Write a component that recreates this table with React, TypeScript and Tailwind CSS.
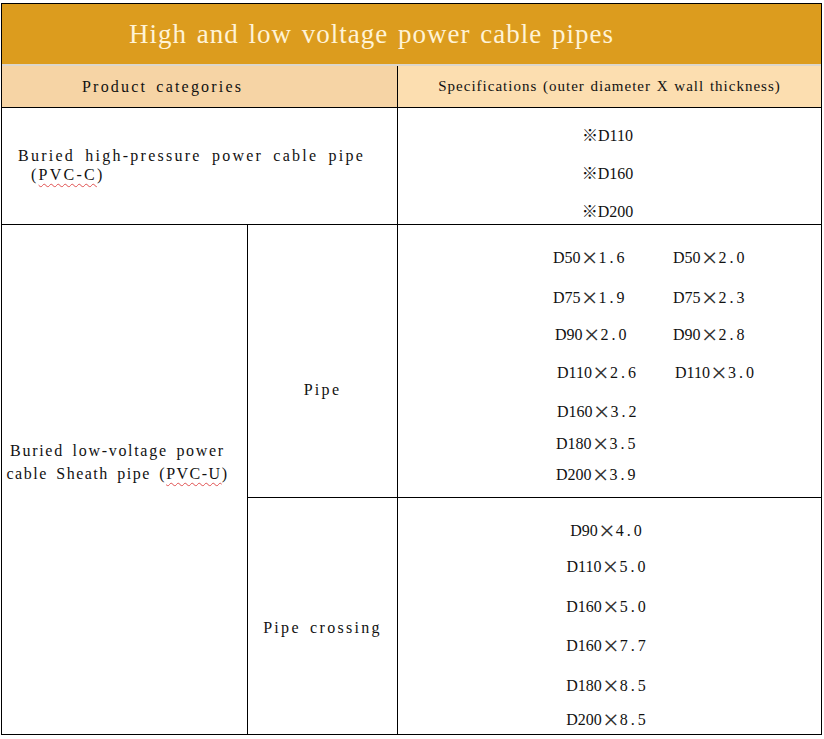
const serif = { fontFamily: '"Liberation Serif", "Noto Sans CJK SC", serif' };

type Spec = { d: string; t: string; ml?: string };

function SpecText({ d, t }: { d: string; t: string }) {
  return (
    <span className="h-[20px] flex items-center whitespace-nowrap">
      {d}
      <span className="w-[18px] h-[20px] flex items-center justify-center text-[28px] leading-none font-light text-[#333]">×</span>
      <span className="tracking-[3px]">{t}</span>
    </span>
  );
}

const pipeRows: { mt: string; left: Spec; right?: Spec }[] = [
  { mt: 'mt-[23px]', left: { d: 'D50', t: '1.6', ml: 'ml-0' }, right: { d: 'D50', t: '2.0', ml: 'ml-0' } },
  { mt: 'mt-[20px]', left: { d: 'D75', t: '1.9', ml: 'ml-0' }, right: { d: 'D75', t: '2.3', ml: 'ml-0' } },
  { mt: 'mt-[17px]', left: { d: 'D90', t: '2.0', ml: 'ml-[2px]' }, right: { d: 'D90', t: '2.8', ml: 'ml-0' } },
  { mt: 'mt-[18px]', left: { d: 'D110', t: '2.6', ml: 'ml-[4px]' }, right: { d: 'D110', t: '3.0', ml: 'ml-[2px]' } },
  { mt: 'mt-[19px]', left: { d: 'D160', t: '3.2', ml: 'ml-[4px]' } },
  { mt: 'mt-[12px]', left: { d: 'D180', t: '3.5', ml: 'ml-[3px]' } },
  { mt: 'mt-[11px]', left: { d: 'D200', t: '3.9', ml: 'ml-[3px]' } },
];

const crossingRows: { mt: string; d: string; t: string }[] = [
  { mt: 'mt-[23px]', d: 'D90', t: '4.0' },
  { mt: 'mt-[16px]', d: 'D110', t: '5.0' },
  { mt: 'mt-[20px]', d: 'D160', t: '5.0' },
  { mt: 'mt-[19px]', d: 'D160', t: '7.7' },
  { mt: 'mt-[20px]', d: 'D180', t: '8.5' },
  { mt: 'mt-[14px]', d: 'D200', t: '8.5' },
];

function Squiggle({ children }: { children: React.ReactNode }) {
  return (
    <span className="underline decoration-wavy decoration-[#e05050] decoration-1 underline-offset-[3px]">{children}</span>
  );
}

export default function App() {
  return (
    <div className="w-[824px] h-[739px] bg-white overflow-hidden pt-[3px] text-[#111]" style={serif}>
      <div className="ml-[1px] w-[821px] border-x border-t border-black">
        <div className="h-[62px] bg-[#DC9C1E] flex items-center justify-center pr-[80px] border-b-2 border-[#dcd6cc]">
          <h1 className="text-[27px] text-[#FFF3D6] tracking-[1px] [word-spacing:2px] leading-none">
            High and low voltage power cable pipes
          </h1>
        </div>

        <div className="grid grid-cols-[396px_1fr] h-[42px] border-b border-black">
          <div className="bg-[#F6D4A5] border-r border-black flex items-center pl-[80px] text-[16px] tracking-[2.2px] [word-spacing:3px]">
            Product categories
          </div>
          <div className="bg-[#FCDEB0] flex items-center justify-center text-[15px] tracking-[1px] [word-spacing:1px]">
            Specifications (outer diameter X wall thickness)
          </div>
        </div>

        <div className="grid grid-cols-[396px_1fr] h-[117px] border-b border-black">
          <div className="border-r border-black flex flex-col justify-center pl-[16px] pb-[3px] text-[16px] leading-[19px] tracking-[2.25px] [word-spacing:4px]">
            <span>Buried high-pressure power cable pipe</span>
            <span className="pl-[13px]">
              (<Squiggle>PVC-C</Squiggle>)
            </span>
          </div>
          <div className="flex flex-col items-center pt-[18px] pr-[4px] text-[16px] leading-[20px]">
            <span>※D110</span>
            <span className="mt-[18px]">※D160</span>
            <span className="mt-[18px]">※D200</span>
          </div>
        </div>

        <div className="grid grid-cols-[246px_150px_1fr] grid-rows-[273px_236px] border-b border-black">
          <div className="row-span-2 border-r border-black flex flex-col items-center justify-center pb-[36px] pr-[14px] text-center text-[16px] leading-[23px] [word-spacing:3px]">
            <span className="tracking-[1.7px]">Buried low-voltage power</span>
            <span className="tracking-[1.5px]">
              cable Sheath pipe (<Squiggle>PVC-U</Squiggle>)
            </span>
          </div>

          <div className="border-r border-b border-black flex items-center justify-center pt-[58px] text-[16px] tracking-[2.3px]">
            Pipe
          </div>
          <div className="border-b border-black flex flex-col pl-[155px] text-[16px] leading-[20px]">
            {pipeRows.map((row, i) => (
              <div key={i} className={`grid grid-cols-[120px_auto] ${row.mt}`}>
                <span className={row.left.ml}>
                  <SpecText d={row.left.d} t={row.left.t} />
                </span>
                {row.right && (
                  <span className={row.right.ml}>
                    <SpecText d={row.right.d} t={row.right.t} />
                  </span>
                )}
              </div>
            ))}
          </div>

          <div className="border-r border-black flex items-center justify-center pt-[24px] text-[16px] tracking-[2.3px] [word-spacing:3px]">
            Pipe crossing
          </div>
          <div className="flex flex-col items-center pr-[4px] text-[16px] leading-[20px]">
            {crossingRows.map((row, i) => (
              <span key={i} className={row.mt}>
                <SpecText d={row.d} t={row.t} />
              </span>
            ))}
          </div>
        </div>
      </div>
    </div>
  );
}
